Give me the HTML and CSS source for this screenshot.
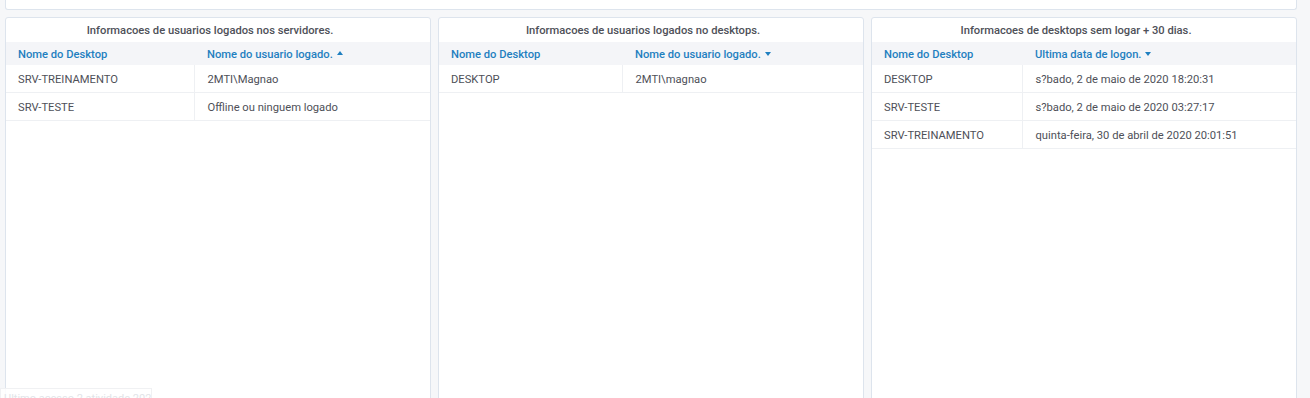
FILE: index.html
```html
<!DOCTYPE html>
<html lang="en">
<head>
    <meta charset="UTF-8">
    <meta name="viewport" content="width=device-width, initial-scale=1.0">
    <title>Usuarios logados</title>
    <link rel="stylesheet" href="styles.css">
</head>
<body>
    <div class="top-panel"></div>

    <div class="row">
        <div class="panel">
            <div class="panel-title">Informacoes de usuarios logados nos servidores.</div>
            <table class="grid">
                <colgroup><col class="c1-srv"><col></colgroup>
                <thead>
                    <tr><th>Nome do Desktop</th><th>Nome do usuario logado. <span class="caret up"></span></th></tr>
                </thead>
                <tbody>
                    <tr><td>SRV-TREINAMENTO</td><td>2MTI\Magnao</td></tr>
                    <tr><td>SRV-TESTE</td><td>Offline ou ninguem logado</td></tr>
                </tbody>
            </table>
        </div>

        <div class="panel">
            <div class="panel-title">Informacoes de usuarios logados no desktops.</div>
            <table class="grid">
                <colgroup><col class="c1-desk"><col></colgroup>
                <thead>
                    <tr><th>Nome do Desktop</th><th>Nome do usuario logado. <span class="caret down"></span></th></tr>
                </thead>
                <tbody>
                    <tr><td>DESKTOP</td><td>2MTI\magnao</td></tr>
                </tbody>
            </table>
        </div>

        <div class="panel">
            <div class="panel-title">Informacoes de desktops sem logar + 30 dias.</div>
            <table class="grid">
                <colgroup><col class="c1-old"><col></colgroup>
                <thead>
                    <tr><th>Nome do Desktop</th><th>Ultima data de logon. <span class="caret down"></span></th></tr>
                </thead>
                <tbody>
                    <tr><td>DESKTOP</td><td>s?bado, 2 de maio de 2020 18:20:31</td></tr>
                    <tr><td>SRV-TESTE</td><td>s?bado, 2 de maio de 2020 03:27:17</td></tr>
                    <tr><td>SRV-TREINAMENTO</td><td>quinta-feira, 30 de abril de 2020 20:01:51</td></tr>
                </tbody>
            </table>
        </div>
    </div>

    <div class="ghost-tip">Ultimo acesso 2 atividade 2020/</div>
</body>
</html>
```

FILE: styles.css
```css
body { margin: 0; background-color: #f6f7f9; font-family: Roboto, "Liberation Sans", Arial, sans-serif; color: #4e5058; font-size: 11.2px; overflow: hidden; }
.top-panel { margin: 0 13px 0 5px; height: 10px; background-color: #fff; border: 1px solid #dde4ed; border-top: none; border-radius: 0 0 3px 3px; box-sizing: border-box; }
.row { display: grid; grid-template-columns: repeat(3, 1fr); gap: 7px; margin: 7px 13px 0 5px; }
.panel { background-color: #fff; border: 1px solid #dde4ed; border-radius: 3px; height: 400px; }
.panel-title { height: 23px; padding: 1px 16px 0 0; line-height: 24px; text-align: center; font-weight: 500; color: #4e5058; }
.grid { width: 100%; border-collapse: collapse; table-layout: fixed; }
.grid th { height: 22px; padding: 1px 0 0 12px; text-align: left; font-weight: 500; color: #1f7fc0; background-color: #f4f5f8; }
.grid td { height: 26px; padding: 1px 0 0 12px; border-bottom: 1px solid #eef0f3; }
.grid td + td, .grid th + th { padding-left: 13px; }
.grid td + td { border-left: 1px solid #eef0f3; }
.c1-srv { width: 188px; }
.c1-desk { width: 183px; }
.c1-old { width: 150px; }
.caret { display: inline-block; width: 0; height: 0; margin-left: 1px; vertical-align: middle; border-left: 3.5px solid transparent; border-right: 3.5px solid transparent; }
.caret.up { border-bottom: 4px solid #1f7fc0; margin-top: -3px; }
.caret.down { border-top: 4px solid #1f7fc0; margin-top: -1px; }
.ghost-tip { position: absolute; left: 0; top: 388px; width: 152px; height: 14px; padding: 3px 0 0 3px; background-color: rgba(255, 255, 255, 0.85); border: 1px solid #f0f1f3; font-size: 11px; line-height: 14px; color: #e2e4e8; white-space: nowrap; overflow: hidden; box-sizing: border-box; }
```
